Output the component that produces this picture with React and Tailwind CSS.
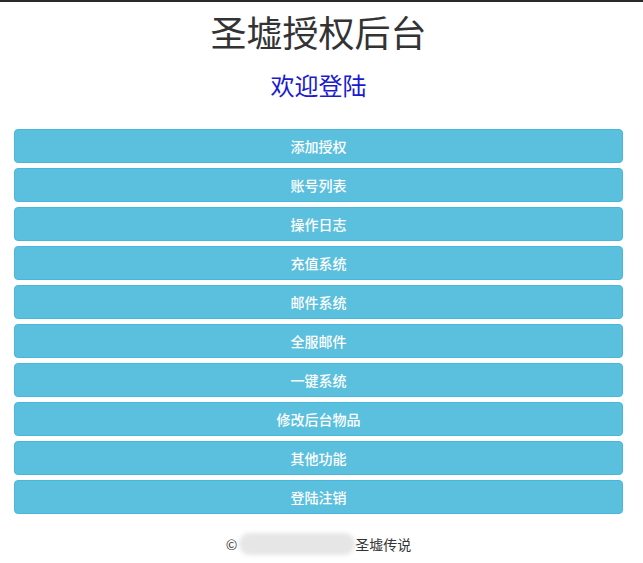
import React from "react";

const menu = [
  "添加授权",
  "账号列表",
  "操作日志",
  "充值系统",
  "邮件系统",
  "全服邮件",
  "一键系统",
  "修改后台物品",
  "其他功能",
  "登陆注销",
];

export default function App() {
  return (
    <div
      className="min-h-[563px] bg-white border-t-2 border-[#2a2a2a] text-[#333]"
      style={{ fontFamily: '"Noto Sans CJK SC", "Microsoft YaHei", sans-serif' }}
    >
      <div className="pl-[14px] pr-[20px]">
        <h1 className="mt-[9px] text-center text-[36px] leading-[40px] font-normal text-[#333]">
          圣墟授权后台
        </h1>
        <h3 className="mt-[21px] text-center text-[24px] leading-[26px] font-normal text-[#1a1ad0]">
          欢迎登陆
        </h3>
        <div className="mt-[31px] flex flex-col gap-[5px]">
          {menu.map((item) => (
            <button
              key={item}
              className="h-[34px] w-full rounded-[4px] border border-[#46b8da] bg-[#5bc0de] text-[14px] leading-[20px] font-medium text-white"
            >
              {item}
            </button>
          ))}
        </div>
        <div className="mt-[19px] flex items-center justify-center text-[14px] leading-[20px] text-[#333]">
          <span className="mr-[2px]">©</span>
          <span className="h-[22px] w-[116px] rounded-full bg-[#e6e6e6] blur-[2px]" />
          <span>圣墟传说</span>
        </div>
      </div>
    </div>
  );
}
